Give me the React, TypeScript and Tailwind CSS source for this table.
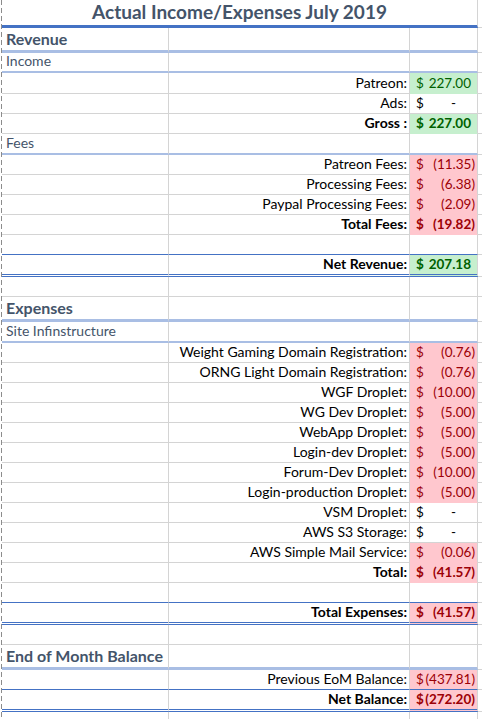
import React from 'react';

type B = 'grid' | 'h2' | 'h3' | 'thin' | 'double';
type Fill = 'green' | 'red' | null;

interface Row {
  h: string;
  b: B;
  a?: string;
  aKind?: 'h2' | 'h3';
  label?: string;
  bold?: boolean;
  val?: string;
  fill?: Fill;
}

const borderCls: Record<B, string> = {
  grid: 'border-b border-b-[#d4d4d4]',
  h2: 'border-b-[3px] border-b-[#a9bee4]',
  h3: 'border-b-2 border-b-[#a9bee4]',
  thin: 'border-b border-b-[#4472c4]',
  double: 'border-b-[3px] [border-bottom-style:double] border-b-[#4472c4]',
};

const rows: Row[] = [
  { h: 'h-[25px]', b: 'h2', a: 'Revenue', aKind: 'h2' },
  { h: 'h-[20px]', b: 'h3', a: 'Income', aKind: 'h3' },
  { h: 'h-[21px]', b: 'grid', label: 'Patreon:', val: '227.00', fill: 'green' },
  { h: 'h-[20px]', b: 'grid', label: 'Ads:', val: '-' },
  { h: 'h-[20px]', b: 'grid', label: 'Gross :', bold: true, val: '227.00', fill: 'green' },
  { h: 'h-[21px]', b: 'h3', a: 'Fees', aKind: 'h3' },
  { h: 'h-[20px]', b: 'grid', label: 'Patreon Fees:', val: '(11.35)', fill: 'red' },
  { h: 'h-[20px]', b: 'grid', label: 'Processing Fees:', val: '(6.38)', fill: 'red' },
  { h: 'h-[20px]', b: 'grid', label: 'Paypal Processing Fees:', val: '(2.09)', fill: 'red' },
  { h: 'h-[20px]', b: 'grid', label: 'Total Fees:', bold: true, val: '(19.82)', fill: 'red' },
  { h: 'h-[20px]', b: 'thin' },
  { h: 'h-[22px]', b: 'double', label: 'Net Revenue:', bold: true, val: '207.18', fill: 'green' },
  { h: 'h-[20px]', b: 'grid' },
  { h: 'h-[25px]', b: 'h2', a: 'Expenses', aKind: 'h2' },
  { h: 'h-[21px]', b: 'h3', a: 'Site Infinstructure', aKind: 'h3' },
  { h: 'h-[20px]', b: 'grid', label: 'Weight Gaming Domain Registration:', val: '(0.76)', fill: 'red' },
  { h: 'h-[20px]', b: 'grid', label: 'ORNG Light Domain Registration:', val: '(0.76)', fill: 'red' },
  { h: 'h-[20px]', b: 'grid', label: 'WGF Droplet:', val: '(10.00)', fill: 'red' },
  { h: 'h-[20px]', b: 'grid', label: 'WG Dev Droplet:', val: '(5.00)', fill: 'red' },
  { h: 'h-[20px]', b: 'grid', label: 'WebApp Droplet:', val: '(5.00)', fill: 'red' },
  { h: 'h-[20px]', b: 'grid', label: 'Login-dev Droplet:', val: '(5.00)', fill: 'red' },
  { h: 'h-[20px]', b: 'grid', label: 'Forum-Dev Droplet:', val: '(10.00)', fill: 'red' },
  { h: 'h-[20px]', b: 'grid', label: 'Login-production Droplet:', val: '(5.00)', fill: 'red' },
  { h: 'h-[20px]', b: 'grid', label: 'VSM Droplet:', val: '-' },
  { h: 'h-[20px]', b: 'grid', label: 'AWS S3 Storage:', val: '-' },
  { h: 'h-[20px]', b: 'grid', label: 'AWS Simple Mail Service:', val: '(0.06)', fill: 'red' },
  { h: 'h-[20px]', b: 'grid', label: 'Total:', bold: true, val: '(41.57)', fill: 'red' },
  { h: 'h-[20px]', b: 'thin' },
  { h: 'h-[22px]', b: 'double', label: 'Total Expenses:', bold: true, val: '(41.57)', fill: 'red' },
  { h: 'h-[20px]', b: 'grid' },
  { h: 'h-[25px]', b: 'h2', a: 'End of Month Balance', aKind: 'h2' },
  { h: 'h-[20px]', b: 'thin', label: 'Previous EoM Balance:', val: '(437.81)', fill: 'red' },
  { h: 'h-[22px]', b: 'double', label: 'Net Balance:', bold: true, val: '(272.20)', fill: 'red' },
  { h: 'h-[20px]', b: 'grid' },
];

function ValueCell({ r }: { r: Row }) {
  const fillBg = r.fill === 'green' ? 'bg-[#c6efce]' : r.fill === 'red' ? 'bg-[#ffc7ce]' : '';
  const color = r.fill === 'green' ? 'text-[#006100]' : r.fill === 'red' ? 'text-[#9c0006]' : 'text-black';
  let bottom = borderCls[r.b];
  if (r.b === 'grid' && r.fill === 'green') bottom = 'border-b border-b-[#c6efce]';
  if (r.b === 'grid' && r.fill === 'red') bottom = 'border-b border-b-[#ffc7ce]';
  const isNeg = r.val?.startsWith('(');
  return (
    <div className={`w-[68px] shrink-0 border-r border-r-[#d4d4d4] ${bottom} ${fillBg}`}>
      {r.val && (
        <div className={`flex h-full items-end justify-between pb-[1px] pl-[6px] text-[13.5px] ${r.val === '-' ? 'pr-[21px]' : isNeg ? 'pr-[2px]' : 'pr-[6px]'} ${color} ${r.bold ? 'font-bold' : ''}`}>
          <span>$</span>
          <span>{r.val}</span>
        </div>
      )}
    </div>
  );
}

export default function App() {
  return (
    <div className="w-[482px] h-[719px] overflow-hidden bg-white flex font-['Lato',sans-serif] text-[14px] leading-[18px] text-black">
      <div className="w-px shrink-0" />
      <div className="w-px shrink-0 bg-[repeating-linear-gradient(to_bottom,#8c8c8c_0_5px,transparent_5px_8px)]" />
      <div className="flex-1 flex flex-col">
        {/* Title */}
        <div className="flex h-[28px] shrink-0">
          <div className="w-[476px] shrink-0 border-r border-r-[#d4d4d4] border-b-[3px] border-b-[#4472c4] flex items-end justify-center pb-[1px]">
            <span className="text-[19px] leading-[24px] font-bold text-[#44546a]">Actual Income/Expenses July 2019</span>
          </div>
          <div className="flex-1 border-b border-b-[#d4d4d4]" />
        </div>
        {rows.map((r, i) => (
          <div key={i} className={`flex shrink-0 ${r.h}`}>
            <div className={`w-[167px] shrink-0 border-r border-r-[#d4d4d4] ${borderCls[r.b]} flex items-end pl-[4px] pb-[1px] overflow-visible whitespace-nowrap`}>
              {r.a && r.aKind === 'h2' && (
                <span className="text-[16px] leading-[20px] font-bold text-[#44546a]">{r.a}</span>
              )}
              {r.a && r.aKind === 'h3' && <span className="text-[#44546a]">{r.a}</span>}
            </div>
            <div className={`w-[241px] shrink-0 border-r border-r-[#d4d4d4] ${borderCls[r.b]} flex items-end justify-end pr-[2px] pb-[1px] whitespace-nowrap`}>
              {r.label && <span className={r.bold ? 'font-bold' : ''}>{r.label}</span>}
            </div>
            <ValueCell r={r} />
            <div className="flex-1 border-b border-b-[#d4d4d4]" />
          </div>
        ))}
      </div>
    </div>
  );
}
